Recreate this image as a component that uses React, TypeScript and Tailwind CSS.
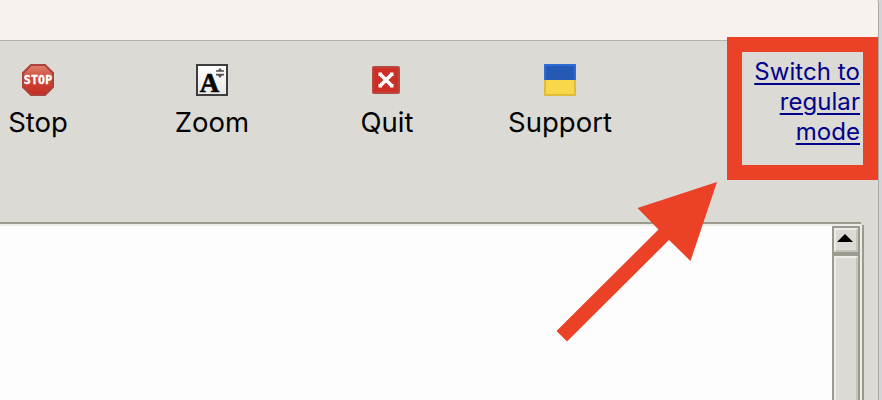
import type { ReactNode } from "react";

function StopIcon() {
  return (
    <svg width="32" height="32" viewBox="0 0 32 32">
      <defs>
        <linearGradient id="stop" x1="0" y1="0" x2="0" y2="1">
          <stop offset="0" stopColor="#df8170" />
          <stop offset="0.45" stopColor="#cd4a3c" />
          <stop offset="1" stopColor="#c52b20" />
        </linearGradient>
      </defs>
      <path d="M9 1H23L31 9V23L23 31H9L1 23V9Z" fill="url(#stop)" stroke="#a9433b" strokeWidth="2" />
      <text x="1.8" y="20" textLength="28.4" lengthAdjust="spacing" fontFamily="DejaVu Sans Mono, monospace" fontWeight="700" fontSize="11.5" fill="#fff" stroke="#fff" strokeWidth="0.4">STOP</text>
    </svg>
  );
}

function ZoomIcon() {
  return (
    <svg width="32" height="32" viewBox="0 0 32 32">
      <defs>
        <linearGradient id="page" x1="0" y1="0" x2="0" y2="1">
          <stop offset="0" stopColor="#fff" />
          <stop offset="1" stopColor="#e8e8e8" />
        </linearGradient>
      </defs>
      <rect x="1" y="1" width="30" height="30" fill="url(#page)" stroke="#3d3d3d" strokeWidth="2" />
      <text x="3.8" y="27.5" fontFamily="Liberation Serif, serif" fontWeight="700" fontSize="27" fill="#050505" stroke="#050505" strokeWidth="0.6">A</text>
      <path d="M20 7H28M20 10.7H28" stroke="#555" strokeWidth="1.7" />
      <path d="M21.5 7 24 4 26.5 7ZM21.5 11 24 14 26.5 11Z" fill="#555" />
    </svg>
  );
}

function QuitIcon() {
  return (
    <svg width="32" height="32" viewBox="0 0 32 32">
      <rect x="3" y="3" width="26" height="26" rx="1" fill="#cb2f26" stroke="#b54940" strokeWidth="2" />
      <path d="M10 10 22 22M22 10 10 22" stroke="#fff" strokeWidth="3.6" />
      <path d="M8.5 8.5H12V12H8.5ZM20 8.5H23.5V12H20ZM8.5 20H12V23.5H8.5ZM20 20H23.5V23.5H20Z" fill="#fff" />
    </svg>
  );
}

function SupportIcon() {
  return (
    <svg width="32" height="32" viewBox="0 0 32 32">
      <path d="M0 0H32V16H0Z" fill="#2e6bd6" />
      <path d="M2 2H30V16H2Z" fill="#2459b4" />
      <path d="M0 16H32V32H0Z" fill="#dfbe3e" />
      <path d="M2 16H30V30H2Z" fill="#f8d84a" />
    </svg>
  );
}

function ToolButton({ icon, label, className, labelClass = "" }: { icon: ReactNode; label: string; className: string; labelClass?: string }) {
  return (
    <button className={`flex shrink-0 flex-col items-center ${className}`}>
      {icon}
      <span className={`mt-[9px] whitespace-nowrap text-[27.5px] leading-[34px] ${labelClass}`}>{label}</span>
    </button>
  );
}

export default function App() {
  return (
    <div className="relative flex h-[400px] w-[882px] overflow-hidden bg-[#d4d3d5] font-['Inter',sans-serif] text-black">
      <div className="flex w-[879px] flex-col overflow-hidden rounded-tr-[3px] border-r border-[#aaa9a9] bg-[#dbdad5]">
        <header className="h-[41px] shrink-0 border-b border-[#b5b3ae] bg-[#f7f2ee]" />
        <nav className="flex h-[181px] shrink-0 pt-[23px]">
          <ToolButton icon={<StopIcon />} label="Stop" className="w-[76px]" />
          <ToolButton icon={<ZoomIcon />} label="Zoom" className="ml-[86px] w-[100px]" />
          <ToolButton icon={<QuitIcon />} label="Quit" className="ml-[74px] w-[100px]" labelClass="pl-[2px]" />
          <ToolButton icon={<SupportIcon />} label="Support" className="ml-[64px] w-[120px]" />
          <a href="#" className="ml-auto mr-[18px] mt-[-7px] w-[130px] text-right text-[24px] leading-[30px] tracking-[0.06px] text-[#00008b] underline decoration-2 underline-offset-[3px]">
            Switch to<br />regular<br />mode
          </a>
        </nav>
        <main className="flex min-h-0 flex-1">
          <div className="flex w-[861px] flex-col border-t-2 border-[#9c9b8f]">
            <div className="h-[2px] shrink-0 bg-[#efebe5]" />
            <div className="flex min-h-0 flex-1">
              <div className="flex-1 bg-[#fdfdfd]" />
              <div className="flex w-[28px] flex-col border-x-2 border-t-2 border-[#9c9b8f]">
                <div className="flex h-[24px] shrink-0 border-2 border-b-[#c5c4ba] border-l-[#efebe5] border-r-[#c5c4ba] border-t-[#efebe5] pl-px pt-[4px]">
                  <svg width="16" height="8" viewBox="0 0 16 8" className="shrink-0">
                    <path d="M8 0 16 8H0Z" fill="#000" />
                  </svg>
                </div>
                <div className="h-[4px] shrink-0 bg-[#9c9b8f]" />
                <div className="flex-1 border-x-2 border-t-2 border-l-[#efebe5] border-r-[#c5c4ba] border-t-[#efebe5]" />
              </div>
              <div className="w-px bg-[#efebe5]" />
            </div>
          </div>
          <div className="mt-[3px] w-[3px] border-l border-r-2 border-l-[#efebe5] border-r-[#9c9b8f]" />
        </main>
      </div>
      <div className="absolute left-[727px] top-[37px] h-[143px] w-[151px] border-[15px] border-[#eb4127]" />
      <svg className="absolute left-[540px] top-[170px]" width="200" height="180" viewBox="0 0 200 180">
        <path d="M177 12 150.5 91 129 70 27 171.5 16.5 161 118.5 59.5 97.5 38Z" fill="#eb4127" />
      </svg>
    </div>
  );
}
